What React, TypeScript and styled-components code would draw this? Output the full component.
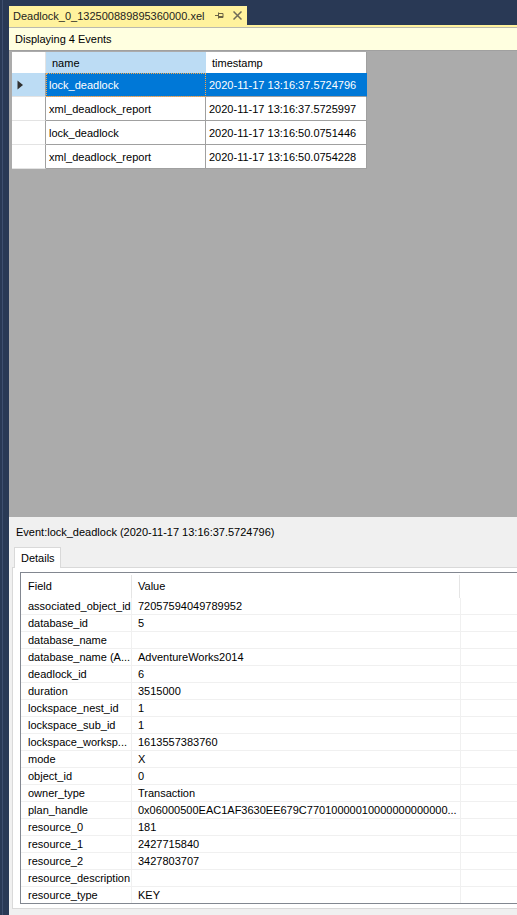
import React from "react";
import styled, { createGlobalStyle } from "styled-components";

const GlobalStyle = createGlobalStyle`
  html, body { margin: 0; padding: 0; background: #293955; }
  body { font-family: "Liberation Sans", Arial, sans-serif; font-size: 11px; color: #000; }
  * { box-sizing: border-box; }
`;

const Page = styled.div`
  width: 517px;
  height: 915px;
  display: flex;
  background: #293955;
  overflow: hidden;
`;

const LeftRail = styled.div`
  flex: none;
  width: 9px;
  background: linear-gradient(to right, #293955 2px, #3e4f6f 2px, #3e4f6f 3px, #293955 3px);
`;

const Main = styled.div`
  flex: 1;
  min-width: 0;
  display: flex;
  flex-direction: column;
`;

const TabStrip = styled.div`
  height: 25px;
  padding-top: 6px;
  display: flex;
`;

const DocTab = styled.div`
  width: 238px;
  height: 19px;
  background: #fff29d;
  display: flex;
  align-items: center;
  padding-left: 4px;
  color: #1e1e1e;
`;

const TabTitle = styled.span`
  flex: 1;
  white-space: nowrap;
`;

const TabIcons = styled.div`
  display: flex;
  align-items: center;
  gap: 9px;
  padding-right: 5px;
`;

const TabRule = styled.div`
  height: 3px;
  background: #fff29d;
  border-bottom: 1px solid #b9b9ae;
`;

const InfoBar = styled.div`
  height: 23px;
  background: #ffffe0;
  border-bottom: 1px solid #a0a0a0;
  display: flex;
  align-items: center;
  padding-left: 6px;
`;

const GridArea = styled.div`
  height: 466px;
  background: #ababab;
  padding: 1px 0 0 3px;
`;

const Grid = styled.div`
  width: 355px;
  display: grid;
  grid-template-columns: 34px 160px 161px;
  grid-template-rows: 21px repeat(4, 24px);
  background: #fff;
`;

const CornerCell = styled.div`
  background: #fff;
  border-right: 1px solid #e3e3e3;
`;

const ColHeader = styled.div<{ $active?: boolean }>`
  background: ${(p) => (p.$active ? "#bcdcf4" : "#fff")};
  display: flex;
  align-items: center;
  padding-left: 6px;
  border-right: 1px solid ${(p) => (p.$active ? "#bcdcf4" : "#a0a0a0")};
`;

const RowHeader = styled.div<{ $selected?: boolean }>`
  background: ${(p) => (p.$selected ? "#bcdcf4" : "#fff")};
  border-bottom: 1px solid #e3e3e3;
  border-right: 1px solid #a0a0a0;
  display: flex;
  align-items: center;
  padding-left: 5px;
`;

const DataCell = styled.div<{ $selected?: boolean; $focused?: boolean }>`
  background: ${(p) => (p.$selected ? "#0078d7" : "#fff")};
  color: ${(p) => (p.$selected ? "#fff" : "#000")};
  border-right: 1px solid ${(p) => (p.$selected ? "#0078d7" : "#a0a0a0")};
  border-bottom: 1px solid #a0a0a0;
  display: flex;
  align-items: center;
  padding-left: 3px;
  white-space: nowrap;
  outline: ${(p) => (p.$focused ? "1px dotted #f7a84a" : "none")};
  outline-offset: -1px;
`;

const DetailPanel = styled.div`
  flex: 1;
  background: #f0f0f0;
  padding-left: 3px;
  display: flex;
  flex-direction: column;
`;

const EventTitle = styled.div`
  height: 30px;
  display: flex;
  align-items: center;
  padding-left: 4px;
  white-space: nowrap;
`;

const TabRow = styled.div`
  height: 20px;
  padding-left: 2px;
  display: flex;
`;

const DetailsTab = styled.div`
  width: 47px;
  height: 21px;
  border: 1px solid #d9d9d9;
  border-bottom: none;
  background: #fff;
  display: flex;
  align-items: center;
  padding-left: 6px;
  position: relative;
  z-index: 1;
`;

const TabPage = styled.div`
  height: 342px;
  border: 1px solid #d9d9d9;
  border-right: none;
  background: #fff;
  padding: 4px 0 0 7px;
`;

const ListBox = styled.div`
  height: 332px;
  border: 1px solid #828790;
  border-right: none;
  overflow: hidden;
  background: #fff;
`;

const ListHeader = styled.div`
  height: 25px;
  display: grid;
  grid-template-columns: 111px 328px 1fr;
`;

const HeaderCol = styled.div`
  position: relative;
  display: flex;
  align-items: center;
  padding-left: 6px;
  &:first-child { padding-left: 7px; }
  &::after {
    content: "";
    position: absolute;
    right: 0;
    top: 2px;
    bottom: 0;
    width: 1px;
    background: #e5e5e5;
  }
  &:last-child::after { display: none; }
`;

const ListRow = styled.div`
  height: 17px;
  display: grid;
  grid-template-columns: 111px 329px 1fr;
`;

const ListCell = styled.div`
  border-bottom: 1px solid #f0f0f0;
  border-right: 1px solid #f0f0f0;
  padding-left: 6px;
  display: flex;
  align-items: center;
  white-space: nowrap;
  overflow: hidden;
  &:first-child { padding-left: 7px; }
  &:last-child { border-right: none; }
`;

const PinIcon = () => (
  <svg width="9" height="7" viewBox="0 0 9 7">
    <path d="M0 3.5h3M3.5 0.5v6M3.5 1.5h4.5v4h-4.5M3.5 4.5h4.5" stroke="#6b6245" strokeWidth="1" fill="none" />
  </svg>
);

const CloseIcon = () => (
  <svg width="9" height="9" viewBox="0 0 9 9">
    <path d="M0.5 0.5L8.5 8.5M8.5 0.5L0.5 8.5" stroke="#6f6a58" strokeWidth="1.5" />
  </svg>
);

const RowArrow = () => (
  <svg width="7" height="10" viewBox="0 0 7 10">
    <path d="M0.5 0.5L6 5L0.5 9.5Z" fill="#303030" />
  </svg>
);

const events = [
  ["lock_deadlock", "2020-11-17 13:16:37.5724796"],
  ["xml_deadlock_report", "2020-11-17 13:16:37.5725997"],
  ["lock_deadlock", "2020-11-17 13:16:50.0751446"],
  ["xml_deadlock_report", "2020-11-17 13:16:50.0754228"],
];

const fields: [string, string][] = [
  ["associated_object_id", "72057594049789952"],
  ["database_id", "5"],
  ["database_name", ""],
  ["database_name (A...", "AdventureWorks2014"],
  ["deadlock_id", "6"],
  ["duration", "3515000"],
  ["lockspace_nest_id", "1"],
  ["lockspace_sub_id", "1"],
  ["lockspace_worksp...", "1613557383760"],
  ["mode", "X"],
  ["object_id", "0"],
  ["owner_type", "Transaction"],
  ["plan_handle", "0x06000500EAC1AF3630EE679C77010000010000000000000..."],
  ["resource_0", "181"],
  ["resource_1", "2427715840"],
  ["resource_2", "3427803707"],
  ["resource_description", ""],
  ["resource_type", "KEY"],
];

export default function App() {
  return (
    <>
      <GlobalStyle />
      <Page>
        <LeftRail />
        <Main>
          <TabStrip>
            <DocTab>
              <TabTitle>Deadlock_0_132500889895360000.xel</TabTitle>
              <TabIcons>
                <PinIcon />
                <CloseIcon />
              </TabIcons>
            </DocTab>
          </TabStrip>
          <TabRule />
          <InfoBar>Displaying 4 Events</InfoBar>
          <GridArea>
            <Grid>
              <CornerCell />
              <ColHeader $active>name</ColHeader>
              <ColHeader>timestamp</ColHeader>
              {events.map(([name, ts], i) => (
                <React.Fragment key={i}>
                  <RowHeader $selected={i === 0}>{i === 0 && <RowArrow />}</RowHeader>
                  <DataCell $selected={i === 0} $focused={i === 0}>{name}</DataCell>
                  <DataCell $selected={i === 0}>{ts}</DataCell>
                </React.Fragment>
              ))}
            </Grid>
          </GridArea>
          <DetailPanel>
            <EventTitle>Event:lock_deadlock (2020-11-17 13:16:37.5724796)</EventTitle>
            <TabRow>
              <DetailsTab>Details</DetailsTab>
            </TabRow>
            <TabPage>
              <ListBox>
                <ListHeader>
                  <HeaderCol>Field</HeaderCol>
                  <HeaderCol>Value</HeaderCol>
                  <HeaderCol />
                </ListHeader>
                {fields.map(([f, v], i) => (
                  <ListRow key={i}>
                    <ListCell>{f}</ListCell>
                    <ListCell>{v}</ListCell>
                    <ListCell />
                  </ListRow>
                ))}
              </ListBox>
            </TabPage>
          </DetailPanel>
        </Main>
      </Page>
    </>
  );
}
